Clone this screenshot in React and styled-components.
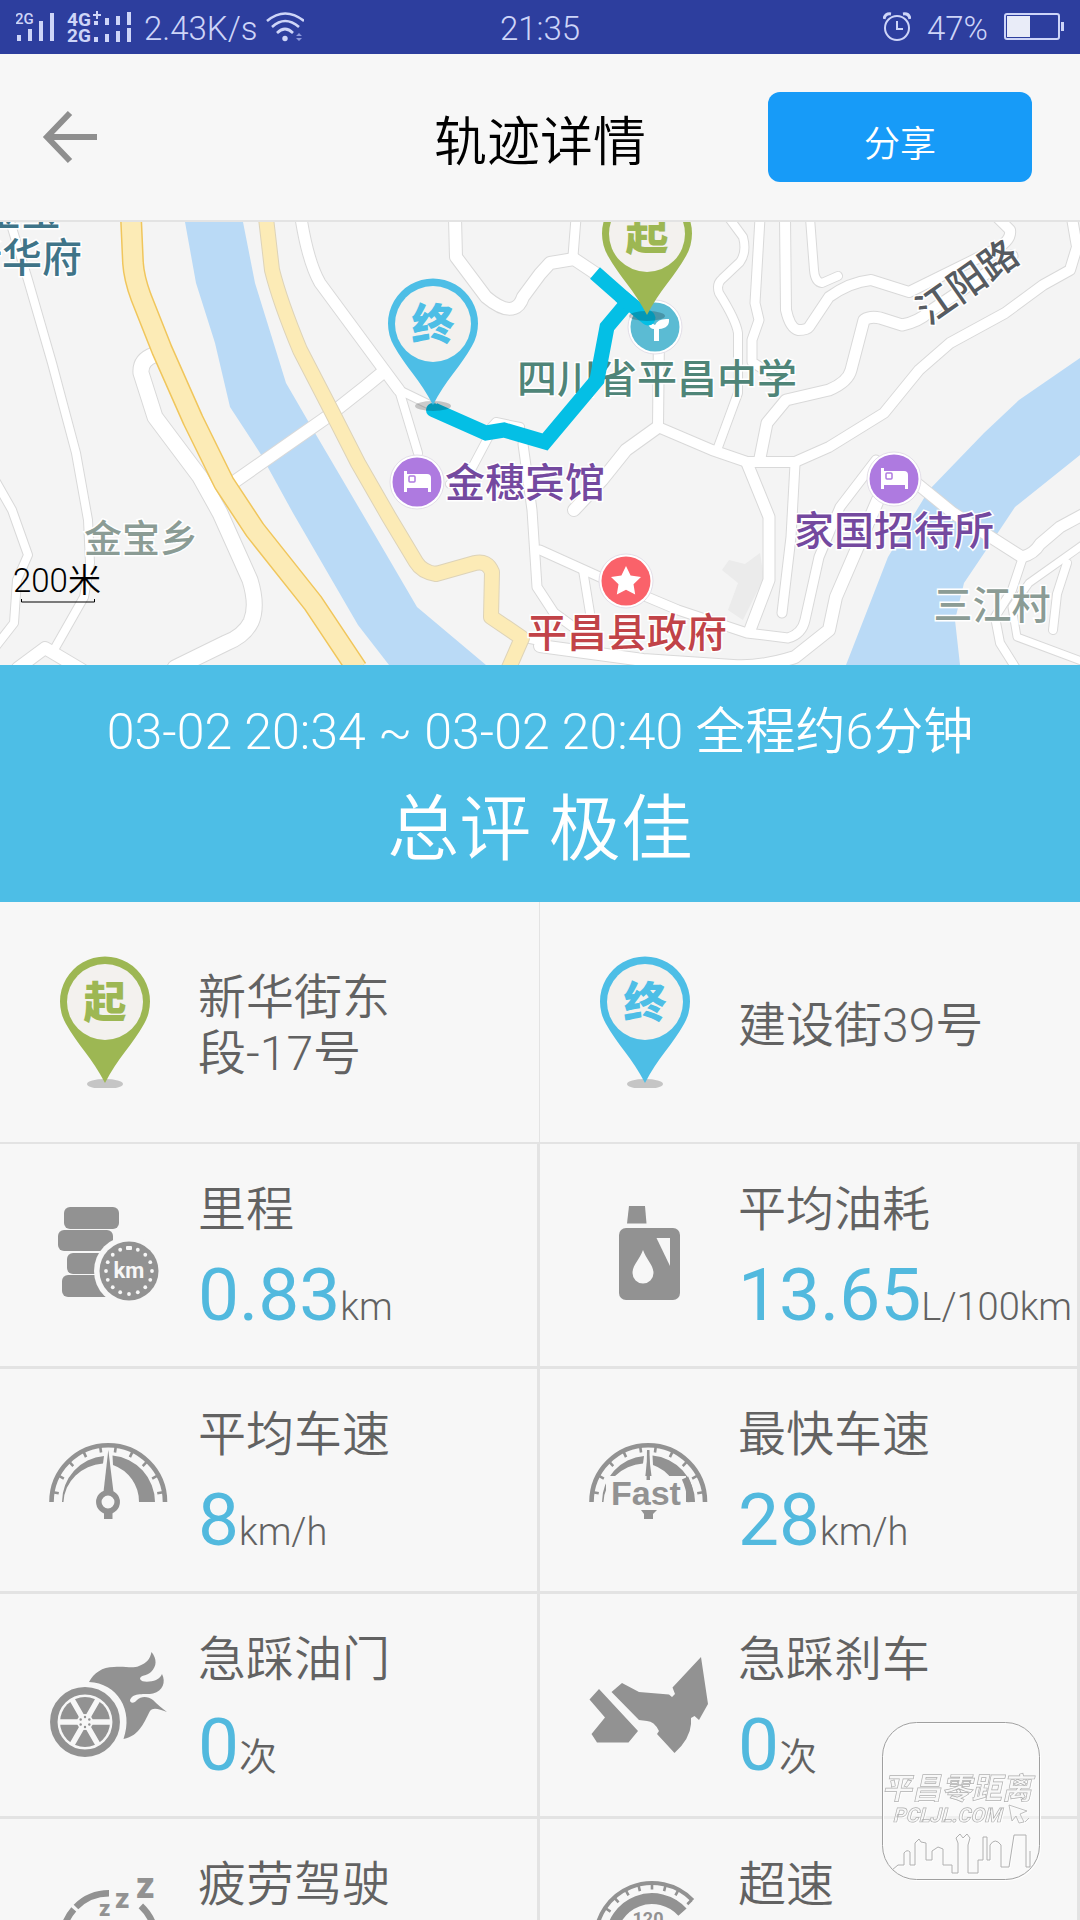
import React from "react";
import styled, { createGlobalStyle } from "styled-components";

const sans = `Roboto, "Noto Sans CJK SC", sans-serif`;

const color = {
  status: "#2d3e9e",
  statusText: "#ced5f8",
  page: "#f7f7f7",
  line: "#e3e3e3",
  share: "#179bf8",
  sky: "#4dbee6",
  value: "#52b9de",
  text: "#626262",
  icon: "#929292",
  green: "#9db753",
  pinFace: "#f3f1ee",
  land: "#f4f4f4",
  water: "#badaf6",
  route: "#04bfe5",
};

const GlobalStyle = createGlobalStyle`
  * { box-sizing: border-box; }
  html, body { margin: 0; padding: 0; background: ${color.page}; }
  body { font-family: ${sans}; font-weight: 350; }
  svg { display: block; flex: none; }
  svg text { font-family: ${sans}; }
`;

const Screen = styled.div`
  display: flex;
  flex-direction: column;
  height: 100vh;
  overflow: hidden;
  background: ${color.page};
`;

/* ---------- status bar ---------- */

const StatusBar = styled.div`
  flex: none;
  display: grid;
  grid-template-columns: 1fr auto 1fr;
  align-items: center;
  height: 54px;
  padding: 0 16px;
  background: ${color.status};
  color: ${color.statusText};
  font-size: 33px;
  line-height: 48px;
`;

const StatusText = styled.span`
  padding-top: 4px;
`;

const StatusGroup = styled.div`
  display: flex;
  align-items: center;
  justify-content: ${(p) => (p.$end ? "flex-end" : "flex-start")};
  gap: ${(p) => (p.$end ? 16 : 8)}px;
`;

const NetworkIcon = () => (
  <svg width="120" height="32" viewBox="16 11 120 32" fill={color.statusText}>
    <text x="15" y="24" fontSize="15" fontWeight="500">2G</text>
    <path d="M17 35h4v6h-4zM28 29h4v12h-4zM39 21h4v20h-4zM50 13h4v28h-4z" />
    <text x="67" y="26" fontSize="19" fontWeight="700">4G</text>
    <text x="67" y="42" fontSize="19" fontWeight="700">2G</text>
    <path d="M93 14h8v2h-8zM96 11h2v8h-2z" />
    <path d="M94 21h4v4h-4zM105 18h4v7h-4zM116 16h4v9h-4zM127 12h4v13h-4z" />
    <path d="M94 37h4v5h-4zM105 34h4v8h-4zM116 31h4v11h-4zM127 28h4v14h-4z" />
  </svg>
);

const WifiIcon = () => (
  <svg width="38" height="32" viewBox="260 11 38 32" fill="none" stroke={color.statusText} strokeWidth="2.6">
    <path d="M261 21Q279 6 298 21" />
    <path d="M266 27Q279 15 293 27" />
    <path d="M271 33Q279 25 287 33" />
    <circle cx="279" cy="38.5" r="2.7" fill={color.statusText} stroke="none" />
    <path d="M290 36l3-3 3 3zM290 38l3 3 3-3z" fill="#8c98dc" stroke="none" />
  </svg>
);

const AlarmIcon = () => (
  <svg width="28" height="30" viewBox="0 0 28 30" fill="none" stroke={color.statusText} strokeWidth="2">
    <circle cx="14" cy="16" r="12" />
    <path d="M14 9v8h6" />
    <path d="M1 7q1-6 7-5M27 7q-1-6-7-5" strokeWidth="3" />
  </svg>
);

const BatteryIcon = () => (
  <svg width="60" height="28" viewBox="0 0 60 28">
    <rect x="1" y="1" width="54" height="25" rx="2" fill="none" stroke={color.statusText} strokeWidth="2" />
    <rect x="3" y="3" width="23" height="21" fill="#e9ecf8" />
    <rect x="57" y="9" width="3" height="9" fill={color.statusText} />
  </svg>
);

/* ---------- title bar ---------- */

const TitleBar = styled.header`
  flex: none;
  display: grid;
  grid-template-columns: 1fr auto 1fr;
  align-items: center;
  height: 168px;
  padding: 0 48px 0 40px;
  border-bottom: 2px solid ${color.line};
`;

const Title = styled.h1`
  margin: 0;
  padding: 12px 0 0 8px;
  color: #000;
  font-size: 53px;
  font-weight: 350;
  line-height: 72px;
`;

const BackButton = styled.button`
  justify-self: start;
  padding: 0;
  border: 0;
  background: none;
`;

const ShareButton = styled.button`
  justify-self: end;
  width: 264px;
  height: 90px;
  padding: 16px 0 0;
  border: 0;
  border-radius: 12px;
  background: ${color.share};
  color: #fff;
  font-family: inherit;
  font-size: 36px;
  font-weight: 350;
  line-height: 48px;
`;

/* ---------- map ---------- */

const Content = styled.main`
  flex: 1;
  min-height: 0;
  overflow: hidden;
`;

const MapView = styled.svg`
  width: 100%;
  height: 443px;
  background: ${color.land};
`;

const minorRoads = [
  [8, "M9-4 28 58 52 141 76 231 88 298 90 341 84 375 55 426"],
  [8, "M-5 258 12 288 28 333 17 358 14 401-4 424"],
  [12, "M18 446 45 426 82 448"],
  [15, "M154 133Q140 138 141 151L155 195 200 255 220 291 250 358Q258 384 251 400 244 414 226 421L175 446"],
  [8, "M399 168 418 231M399 168 432 184"],
  [11, "M301-4Q308 40 320 61L379 141 399 168"],
  [12, "M234 260 327 195 365 165 382 151"],
  [9, "M576-4 573 34"],
  [8, "M489 214 472 246 450 262M486 211 496 200 520 205"],
  [9, "M523 222 532 288 537 365 554 391 580 410"],
  [8, "M717 228 738 171 738 111Q736 98 719 71 716 62 722 57L740 40Q747 30 743 15L729-4"],
  [9, "M760-4 755 81 759 98 752 118 752 140 781 158"],
  [8, "M810-4 814 48Q815 60 822 61L838 54"],
  [10, "M785-4 786 88Q790 106 798 108 807 108 809 105L829 75Q850 60 871 58L909 70 990 30Q1012 20 1010 8L998-4"],
  [11, "M760 236 767 201 786 178 829 168Q848 160 851 148L864 98Q870 94 880 96L902 103Q918 100 929 90L1012 34"],
  [12, "M658 205 626 228 602 258 574 288"],
  [11, "M747 241 769 295 769 358 750 408"],
  [9, "M795 242 791 315 782 391"],
  [8, "M583 348 590 391"],
  [9, "M540 328 602 356 678 388 747 411 788 416Q802 412 805 398L819 335 840 285 876 238"],
  [12, "M890 250 836 375 829 408 795 435Q760 446 733 444L643 438 540 424"],
  [6, "M884 262 832 382"],
  [8, "M1022 338 1012 368 995 395 1000 421 1017 448"],
  [7, "M1084 322 1029 361 1012 385 1017 415 1084 440"],
  [8, "M1067 341 1057 372 1053 408"],
  [11, "M915 260 953 291 1022 335Q1034 332 1040 322L1060 305 1084 292"],
  [12, "M455-4 456 35 486 75Q504 90 514 86 520 84 523 75L540 52 550 41 574 37 595 51"],
  [10, "M659 110 658 205 712 228 747 240 795 240 829 225 884 191 919 148 950 121 1005 91 1043 63 1070 48 1077 25 1072-4"],
  [8, "M520 415 545 420"],
];

const MapRoads = () => (
  <g fill="none" strokeLinejoin="round">
    {minorRoads.map(([w, d], i) => (
      <path key={`c${i}`} d={d} stroke="#d9d9d9" strokeWidth={w + 2} strokeLinecap="round" />
    ))}
    {minorRoads.map(([w, d], i) => (
      <path key={`f${i}`} d={d} stroke="#fff" strokeWidth={w} strokeLinecap="round" />
    ))}
    {[["#ddd3b8", 16], ["#fcebb6", 14]].map(([s, w]) => (
      <path
        key={s}
        d="M266-4 272 48Q280 80 300 128L331 188 358 241 389 295 416 340Q422 350 436 352L475 341Q487 338 492 350L491 395 522 416 508 448"
        stroke={s}
        strokeWidth={w}
      />
    ))}
    {[["#f0c65c", 22], ["#fcebb6", 19]].map(([s, w]) => (
      <path key={s} d="M131-4 133 41Q134 56 141 75L162 128 193 198 224 261 255 308 313 381 357 447" stroke={s} strokeWidth={w} />
    ))}
  </g>
);

const MapLabel = styled.text`
  font-size: ${(p) => p.$size || 40}px;
  font-weight: 500;
  text-anchor: ${(p) => p.$anchor || "middle"};
  fill: ${(p) => p.$tone};
  stroke: #fff;
  stroke-width: 3px;
  paint-order: stroke;
`;

const PoiDot = ({ x, y, fill, children }) => (
  <g transform={`translate(${x} ${y})`}>
    <circle r="27" fill="#fff" stroke="#e3dfe8" />
    <circle r="24.5" fill={fill} />
    {children}
  </g>
);

const Bed = () => (
  <>
    <path d="M-13-11h3v3h20q4 0 4 4v14h-3V6h-21v4h-3z" fill="#fff" />
    <rect x="-8" y="-6" width="6" height="6" rx="1" fill="none" stroke="#ae7ae0" strokeWidth="1.500" />
  </>
);

const PinShape = ({ tone, label }) => (
  <>
    <ellipse cx="0" cy="82" rx="18" ry="5" fill="#000" opacity=".2" />
    <path d="M0 81C-12 57-28 42-39 22A45 45 0 1 1 39 22C28 42 12 57 0 81Z" fill={tone} />
    <circle cy="0" r="38" fill={color.pinFace} />
    <text y="16" fontSize="43" fontWeight="900" textAnchor="middle" fill={tone}>{label}</text>
  </>
);

const TrackMap = () => (
  <MapView viewBox="0 0 1080 443" preserveAspectRatio="xMidYMid slice" role="img" aria-label="行驶轨迹地图">
    <path
      d="M185 0 196 61 215 121 230 185 260 231 293 291 358 403 389 443H486L417 385 372 308 315 211 286 161 255 61 243 0Z"
      fill={color.water}
    />
    <path
      d="M1080 136 1019 178 984 211 929 268 888 335 846 443H960L955 398 964 361 995 315 1015 285 1080 233Z"
      fill={color.water}
    />
    <path d="M722 348 729 338 745 342 760 331 764 356 743 398 728 388 738 361Z" fill="#ebebeb" />
    <MapRoads />
    <MapLabel x="61" y="3" $anchor="end" $tone="#3f7488">金宝</MapLabel>
    <MapLabel x="82" y="50" $anchor="end" $tone="#3f7488">新华府</MapLabel>
    <MapLabel x="141" y="330" $size="38" $tone="#8b9c95">金宝乡</MapLabel>
    <MapLabel x="992" y="397" $size="39" $tone="#8b9c95">三江村</MapLabel>
    <MapLabel transform="translate(975 71) rotate(-35)" $size="38" $tone="#565b61">江阳路</MapLabel>
    <MapLabel x="657" y="171" $tone="#4f8578">四川省平昌中学</MapLabel>
    <MapLabel x="525" y="275" $tone="#74499f">金穗宾馆</MapLabel>
    <MapLabel x="894" y="323" $tone="#74499f">家国招待所</MapLabel>
    <MapLabel x="627" y="425" $tone="#c14348">平昌县政府</MapLabel>
    <PoiDot x="417" y="260" fill="#ae7ae0"><Bed /></PoiDot>
    <PoiDot x="894" y="257" fill="#ae7ae0"><Bed /></PoiDot>
    <PoiDot x="655" y="105" fill="#5bbbd3">
      <path d="M-1 14V2q-4 0-6-5 5-1 7 1 3-7 14-6 1 9-10 10v12z" fill="#fff" />
    </PoiDot>
    <PoiDot x="626" y="359" fill="#fa626a">
      <path d="M0-15 4.600-5.600 15-4 7.500 3.300 9.200 13.500 0 8.700-9.200 13.500-7.500 3.300-15-4-4.600-5.600Z" fill="#fff" />
    </PoiDot>
    <path
      d="M595 51 628 80 607 105 597 158 545 220 504 208 486 211 434 188"
      fill="none"
      stroke={color.route}
      strokeWidth="15"
    />
    <path d="M622 75 648 96" fill="none" stroke={color.route} strokeWidth="15" strokeLinecap="round" />
    <circle cx="433" cy="188" r="7" fill={color.route} />
    <g transform="translate(433 102)"><PinShape tone={color.sky} label="终" /></g>
    <g transform="translate(647 12)"><PinShape tone={color.green} label="起" /></g>
    <text x="13" y="370" fontSize="33" fontWeight="350" fill="#000">200米</text>
    <path d="M21.500 377v3H94.500v-3" fill="none" stroke="#000" />
  </MapView>
);

/* ---------- summary ---------- */

const Summary = styled.section`
  display: flex;
  flex-direction: column;
  align-items: center;
  gap: 18px;
  padding: 35px 24px 24px;
  background: ${color.sky};
  color: #fff;
`;

const Period = styled.p`
  margin: 0;
  font-size: 50px;
  line-height: 64px;
`;

const Rating = styled.p`
  margin: 0;
  font-size: 72px;
  line-height: 96px;
`;

/* ---------- cells ---------- */

const Grid = styled.ul`
  display: grid;
  grid-template-columns: 1fr 1fr;
  margin: 0;
  padding: 0;
  list-style: none;
`;

const Place = styled.li`
  display: flex;
  align-items: center;
  gap: 30px;
  height: 242px;
  padding-left: 48px;
  border-bottom: 2px solid ${color.line};
  color: ${color.text};
  font-size: 48px;
  line-height: 56px;

  &:nth-child(odd) {
    border-right: 1px solid ${color.line};
  }
`;

const PlaceName = styled.span`
  padding-top: 8px;
`;

const Metric = styled.li`
  display: flex;
  align-items: center;
  gap: 30px;
  height: 225px;
  padding-left: 48px;
  border-right: 3px solid ${color.line};
  border-bottom: 3px solid ${color.line};
`;

const MetricText = styled.div`
  display: flex;
  flex-direction: column;
  align-self: flex-start;
  padding-top: 38px;
  white-space: nowrap;
`;

const MetricLabel = styled.span`
  color: ${color.text};
  font-size: 48px;
  line-height: 56px;
`;

const MetricValue = styled.span`
  color: ${color.value};
  font-size: 73px;
  font-weight: 400;
  line-height: 114px;
`;

const Unit = styled.span`
  color: ${color.text};
  font-size: 38px;
  font-weight: 350;
  line-height: 40px;
`;

const PlacePin = ({ tone, label }) => (
  <svg width="120" height="132" viewBox="0 0 120 132">
    <g transform="translate(57 46)"><PinShape tone={tone} label={label} /></g>
  </svg>
);

const Icon = ({ children }) => (
  <svg width="120" height="120" viewBox="0 0 120 120" fill={color.icon} overflow="visible" aria-hidden="true">
    {children}
  </svg>
);

const polar = (cx, cy, r, deg) => {
  const a = (deg * Math.PI) / 180;
  return [cx + r * Math.cos(a), cy - r * Math.sin(a)];
};

const Ticks = ({ cx, cy, from, to, angles }) => (
  <path
    d={angles.map((a) => `M${polar(cx, cy, from, a)}L${polar(cx, cy, to, a)}`).join("")}
    stroke={color.icon}
    strokeWidth="2.6"
    fill="none"
  />
);

const MileageIcon = () => (
  <Icon>
    <rect x="16" y="12" width="55" height="22" rx="6" />
    <rect x="10" y="35" width="55" height="21" rx="6" />
    <rect x="19" y="58" width="55" height="21" rx="6" />
    <rect x="14" y="80" width="55" height="22" rx="6" />
    <circle cx="81" cy="76" r="35" fill={color.page} />
    <circle cx="81" cy="76" r="29.500" />
    <g fill={color.page}>
      {Array.from({ length: 16 }, (_, i) => {
        const [x, y] = polar(81, 76, 23, i * 22.5);
        return <circle key={i} cx={x} cy={y} r="1.900" />;
      })}
      <rect x="78" y="51" width="6" height="4" rx="1" />
      <text x="81" y="83" fontSize="22" fontWeight="700" textAnchor="middle">km</text>
    </g>
  </Icon>
);

const FuelIcon = () => (
  <Icon>
    <path d="M41 11H57L58.500 28.500H39Z" />
    <rect x="31" y="33" width="61" height="72" rx="7" />
    <path d="M68.500 43H82V71Z" fill={color.page} />
    <path d="M55 55C58 64 65.500 70 65.500 78A10.500 10.500 0 0 1 44.500 78C44.500 70 52 64 55 55Z" fill={color.page} />
  </Icon>
);

const GaugeArc = () => (
  <>
    <path d="M3.500 82A56.700 56.700 0 0 1 117 82" fill="none" stroke={color.icon} strokeWidth="4.600" />
    <Ticks cx={60} cy={82} from={56} to={50} angles={[10, 28, 46, 64, 82, 98, 116, 134, 152, 170]} />
    <path d="M56 36A46 46 0 0 0 14 82H15.500A43 40 0 0 1 55 43.500Z" />
    <path d="M64.500 35.500A47 47 0 0 1 107 82H91A39 39 0 0 0 65 45Z" />
    <path d="M60.300 30 65.500 72H55.500Z" stroke={color.page} strokeWidth="3" paintOrder="stroke" />
  </>
);

const AverageSpeedIcon = () => (
  <Icon>
    <GaugeArc />
    <circle cx="60" cy="82" r="9.200" fill={color.page} stroke={color.icon} strokeWidth="5.500" />
    <path d="M56 92H64.500V99H56Z" />
  </Icon>
);

const FastText = styled.text`
  && {
    font-family: "Liberation Sans", sans-serif;
  }
  font-size: 34px;
  font-weight: 700;
  text-anchor: middle;
  stroke: ${color.page};
  stroke-width: 6px;
  paint-order: stroke;
`;

const TopSpeedIcon = () => (
  <Icon>
    <GaugeArc />
    <path d="M18 56H98V86H18Z" fill={color.page} />
    <path d="M59 30H61.500L62 60H58.500Z" />
    <path d="M97 58Q102 68 103 82" fill="none" stroke={color.icon} strokeWidth="7" />
    <FastText x="58" y="85">Fast</FastText>
    <path d="M53 90H69L65 94V99H56V94Z" />
  </Icon>
);

const ThrottleIcon = () => (
  <Icon>
    <path d="M41 37C46 28 54 22 66 22 78 21 84 24 91 21 99 18 102 14 103.500 7 109 14 109 21 103 27 99 31 92 30 92 34 94 38 103 37 108 35 112 33 113 31 114 29 118 37 115 46 105 48.500 97 50 85 47 82 55 82 59 87 58 89 55 93 51 100 51 105 55 110 60 114 63 119 67 111 64 105 62 102 66 97 75 92 91 75.500 94 86 65 69 38 41 37Z" />
    <circle cx="37" cy="77" r="31.200" fill={color.page} stroke={color.icon} strokeWidth="7.500" />
    <circle cx="37" cy="77" r="25" />
    <path
      d={[0, 60, 120].map((a) => `M${polar(37, 77, 26, a)}L${polar(37, 77, 26, a + 180)}`).join("")}
      stroke={color.page}
      strokeWidth="5.500"
    />
    <circle cx="37" cy="77" r="8" fill={color.page} />
    {[0, 60, 120, 180, 240, 300].map((a) => {
      const [x, y] = polar(37, 77, 5, a + 30);
      return <circle key={a} cx={x} cy={y} r="1.200" />;
    })}
  </Icon>
);

const BrakeIcon = () => (
  <Icon>
    <path d="M11 44 50 86 40.500 97.500H9L3.500 89 17 72.500 1.500 54.500Z" />
    <path d="M34 38 51 47 81 49.500 84 52 87 49 84.500 42.500 113 12 120 59 111 75 106.500 71 103 73V79Q102 94 86.500 108L69 89 71 86Q66 76 59 76L51 75 23.500 47Z" />
  </Icon>
);

const FatigueIcon = () => (
  <Icon>
    <path
      d={`M${polar(61, 70, 46.7, 176)}A46.700 46.700 0 0 1 ${polar(61, 70, 46.7, 139)}M${polar(61, 70, 46.7, 135)}A46.700 46.700 0 0 1 61 23.300M${polar(61, 70, 46.7, 47)}A46.700 46.700 0 0 1 ${polar(61, 70, 46.7, 4)}`}
      fill="none"
      stroke={color.icon}
      strokeWidth="6.500"
    />
    <text x="51" y="46" fontSize="22" fontWeight="900">z</text>
    <text x="67" y="38" fontSize="28" fontWeight="900">z</text>
    <text x="88" y="28" fontSize="36" fontWeight="900">z</text>
  </Icon>
);

const OverspeedIcon = () => (
  <Icon>
    <path
      d={`M${polar(64, 69.6, 56.6, 180)}A56.600 56.600 0 0 1 ${polar(64, 69.6, 56.6, 44)}`}
      fill="none"
      stroke={color.icon}
      strokeWidth="4"
    />
    <Ticks cx={64} cy={69.6} from={56} to={50} angles={[45, 62, 76, 90, 104, 118, 132, 146, 160]} />
    <path
      d={`M${polar(64, 69.6, 41, 180)}A41 41 0 0 1 ${polar(64, 69.6, 41, 42)}`}
      fill="none"
      stroke={color.icon}
      strokeWidth="11"
    />
    <text x="60" y="55" fontSize="18" fontWeight="700" textAnchor="middle">120</text>
  </Icon>
);

const metrics = [
  { label: "里程", value: "0.83", unit: "km", Glyph: MileageIcon },
  { label: "平均油耗", value: "13.65", unit: "L/100km", Glyph: FuelIcon },
  { label: "平均车速", value: "8", unit: "km/h", Glyph: AverageSpeedIcon },
  { label: "最快车速", value: "28", unit: "km/h", Glyph: TopSpeedIcon },
  { label: "急踩油门", value: "0", unit: "次", Glyph: ThrottleIcon },
  { label: "急踩刹车", value: "0", unit: "次", Glyph: BrakeIcon },
  { label: "疲劳驾驶", value: "", unit: "", Glyph: FatigueIcon },
  { label: "超速", value: "", unit: "", Glyph: OverspeedIcon },
];

/* ---------- floating site badge ---------- */

const Badge = styled.div`
  position: fixed;
  right: 39px;
  bottom: 39px;
  filter: drop-shadow(1px 1px 0 #fff);
`;

const SiteBadge = () => (
  <Badge>
    <svg width="160" height="160" viewBox="0 0 160 160" fill="none" stroke="#b0b0b0">
      <rect x="1.500" y="1.500" width="157" height="157" rx="34" fill="#f8f8f8" fillOpacity=".3" stroke="#a0a0a0" />
      <g strokeWidth=".7" fill="#f8f8f8" fontWeight="700">
        <text x="0" y="0" fontSize="30" textAnchor="middle" transform="translate(76 78) skewX(-12)">平昌零距离</text>
        <text x="0" y="0" fontSize="20" textAnchor="middle" transform="translate(66 101) skewX(-14)">PCLJL.COM</text>
      </g>
      <path d="M128 84 146 90 139 93 143 101 138 102 135 95 131 100ZM144 101l4-4" strokeWidth=".8" />
      <path
        d="M11 149 17 144H23V132Q26 128 29 131V144H34V122L38 118 40 121 45 122V139H51V130L57 126 62 128V144H71V152H77V122L75 117 79 113 82 117 86 113 89 117 87 124V152H97V139H102V116H106V139H109V124Q114 116 120 124V146H128L133 114H145V146H149V130"
        strokeWidth="1"
      />
    </svg>
  </Badge>
);

export default function App() {
  return (
    <Screen>
      <GlobalStyle />
      <StatusBar>
        <StatusGroup>
          <NetworkIcon />
          <StatusText>2.43K/s</StatusText>
          <WifiIcon />
        </StatusGroup>
        <StatusText>21:35</StatusText>
        <StatusGroup $end>
          <AlarmIcon />
          <StatusText>47%</StatusText>
          <BatteryIcon />
        </StatusGroup>
      </StatusBar>
      <TitleBar>
        <BackButton type="button" aria-label="返回">
          <svg width="60" height="54" viewBox="0 0 60 54" fill="none" stroke="#8f8f8f" strokeWidth="6">
            <path d="M30 3 7 27 30 51M7 27H57" />
          </svg>
        </BackButton>
        <Title>轨迹详情</Title>
        <ShareButton type="button">分享</ShareButton>
      </TitleBar>
      <Content>
        <TrackMap />
        <Summary>
          <Period>03-02 20:34 ~ 03-02 20:40 全程约6分钟</Period>
          <Rating>总评 极佳</Rating>
        </Summary>
        <Grid>
          <Place>
            <PlacePin tone={color.green} label="起" />
            <PlaceName>新华街东<br />段-17号</PlaceName>
          </Place>
          <Place>
            <PlacePin tone={color.sky} label="终" />
            <PlaceName>建设街39号</PlaceName>
          </Place>
        </Grid>
        <Grid>
          {metrics.map(({ label, value, unit, Glyph }) => (
            <Metric key={label}>
              <Glyph />
              <MetricText>
                <MetricLabel>{label}</MetricLabel>
                {value && <MetricValue>{value}<Unit>{unit}</Unit></MetricValue>}
              </MetricText>
            </Metric>
          ))}
        </Grid>
      </Content>
      <SiteBadge />
    </Screen>
  );
}
